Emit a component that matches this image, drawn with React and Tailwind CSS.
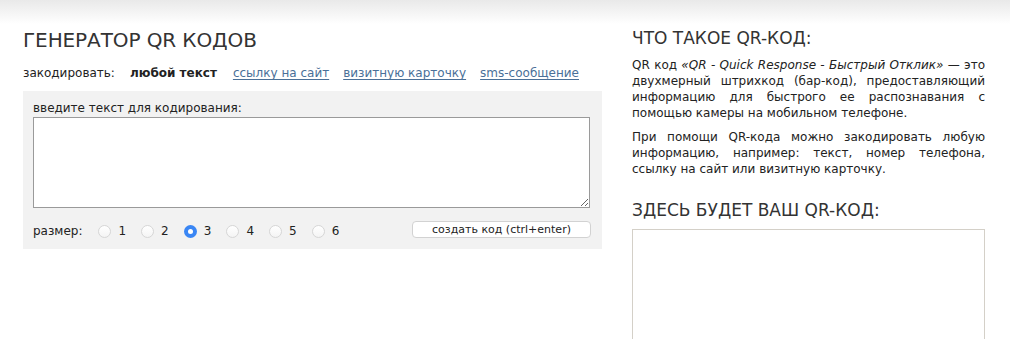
import { useState } from "react";

const links = ["ссылку на сайт", "визитную карточку", "sms-сообщение"];
const sizes = [1, 2, 3, 4, 5, 6];

function Radio({ checked, onClick, label }) {
  return (
    <label className="flex items-center gap-[7px] cursor-pointer" onClick={onClick}>
      <span
        className={
          checked
            ? "w-[13px] h-[13px] rounded-full bg-[#3a86f4] flex items-center justify-center"
            : "w-[13px] h-[13px] rounded-full bg-gradient-to-b from-white to-[#f4f4f4] border border-[#d6d6d6]"
        }
      >
        {checked && <span className="w-[5px] h-[5px] rounded-full bg-white" />}
      </span>
      <span>{label}</span>
    </label>
  );
}

export default function App() {
  const [size, setSize] = useState(3);
  const [text, setText] = useState("");

  return (
    <div
      className="w-[1010px] h-[339px] overflow-hidden bg-gradient-to-b from-[#e9e9e9] to-white to-[24px] text-[#222]"
      style={{ fontFamily: "'DejaVu Sans', Verdana, sans-serif" }}
    >
      <div className="flex pt-[27px]">
        {/* left column */}
        <div className="ml-[23px] w-[579px]">
          <h1 className="text-[20px] leading-[26px] text-[#333] tracking-[-0.1px]">ГЕНЕРАТОР QR КОДОВ</h1>

          <div className="flex items-center text-[12px] mt-[12px] h-[16px]">
            <span className="mr-[15px]">закодировать:</span>
            <b className="mr-[16px]">любой текст</b>
            {links.map((l) => (
              <a key={l} href="#" className="mr-[14px] text-[#4a7098] underline underline-offset-2">
                {l}
              </a>
            ))}
          </div>

          <div className="mt-[10px] bg-[#f2f2f2] px-[10px] pt-[9px] pb-[14px] h-[158px]">
            <div className="text-[12px] leading-[16px]">введите текст для кодирования:</div>
            <textarea
              value={text}
              onChange={(e) => setText(e.target.value)}
              className="block mt-[1px] w-[557px] h-[91px] bg-white border border-[#9a9a9a] outline-none text-[12px] p-1"
            />
            <div className="flex items-center justify-between mt-[10px]">
              <div className="flex items-center text-[12px] gap-[15px] pt-[4px]">
                <span className="mr-[1px]">размер:</span>
                {sizes.map((s) => (
                  <Radio key={s} label={s} checked={size === s} onClick={() => setSize(s)} />
                ))}
              </div>
              <button className="w-[179px] h-[17px] mr-[1px] bg-white border border-[#d2d2d2] rounded-[4px] text-[11px] leading-[15px] text-[#222]">
                создать код (ctrl+enter)
              </button>
            </div>
          </div>
        </div>

        {/* right column */}
        <div className="ml-[30px] w-[353px]">
          <h2 className="text-[17px] leading-[22px] text-[#333]">ЧТО ТАКОЕ QR-КОД:</h2>
          <p className="mt-[8px] text-[12px] leading-[16px] text-justify">
            QR код <i>«QR - Quick Response - Быстрый Отклик»</i> — это двухмерный штрихкод (бар-код),
            предоставляющий информацию для быстрого ее распознавания с помощью камеры на мобильном телефоне.
          </p>
          <p className="mt-[8px] text-[12px] leading-[16px] text-justify">
            При помощи QR-кода можно закодировать любую информацию, например: текст, номер телефона,
            ссылку на сайт или визитную карточку.
          </p>
          <h2 className="mt-[22px] text-[17px] leading-[22px] text-[#333]">ЗДЕСЬ БУДЕТ ВАШ QR-КОД:</h2>
          <div className="mt-[8px] h-[140px] border border-[#d4d0c8] bg-white" />
        </div>
      </div>
    </div>
  );
}
